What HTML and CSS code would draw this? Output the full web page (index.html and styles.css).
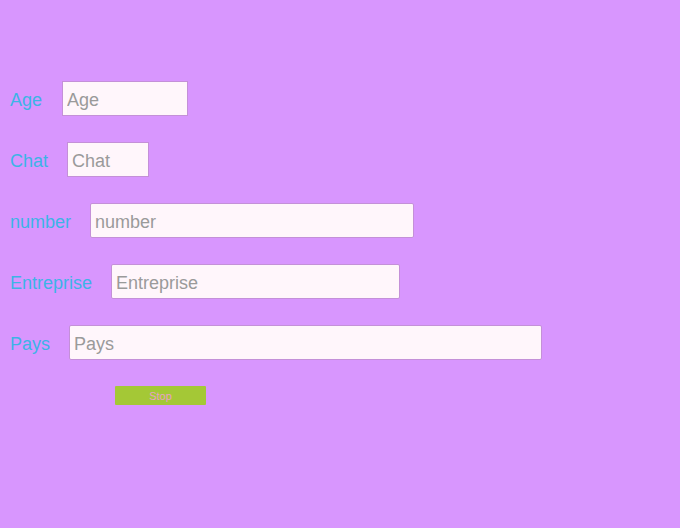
FILE: index.html
```html
<!DOCTYPE html>
<html>
<head>
<meta charset="utf-8">
<link rel="stylesheet" href="styles.css">
</head>
<body>
<form class="form">
  <div class="row">
    <label class="label">Age</label>
    <input class="field field-age" type="text" placeholder="Age">
  </div>
  <div class="row">
    <label class="label">Chat</label>
    <input class="field field-chat" type="text" placeholder="Chat">
  </div>
  <div class="row">
    <label class="label">number</label>
    <input class="field field-number round" type="text" placeholder="number">
  </div>
  <div class="row">
    <label class="label">Entreprise</label>
    <input class="field field-entreprise round" type="text" placeholder="Entreprise">
  </div>
  <div class="row">
    <label class="label">Pays</label>
    <input class="field field-pays round" type="text" placeholder="Pays">
  </div>
  <div class="actions">
    <button class="stop" type="button">Stop</button>
  </div>
</form>
</body>
</html>
```
FILE: styles.css
```css
html, body {
  margin: 0;
  padding: 0;
  background: #d896fe;
  font-family: "Liberation Sans", Arial, sans-serif;
}
.form {
  display: flex;
  flex-direction: column;
  gap: 26px;
  padding: 81px 0 0 10px;
}
.row {
  display: flex;
  align-items: center;
  height: 35px;
}
.label {
  font-size: 18px;
  color: #3cb4e6;
  padding-top: 3px;
}
.field {
  box-sizing: border-box;
  height: 35px;
  border: 1px solid #c490d8;
  background: #fff6fb;
  font-family: "Liberation Sans", Arial, sans-serif;
  font-size: 18px;
  padding: 3px 4px 0;
  color: #555;
  outline: none;
}
.field::placeholder {
  color: #9a9a9a;
}
.round {
  border-radius: 2px;
}
.field-age { margin-left: 20px; width: 126px; }
.field-chat { margin-left: 19px; width: 82px; }
.field-number { margin-left: 19px; width: 324px; }
.field-entreprise { margin-left: 19px; width: 289px; }
.field-pays { margin-left: 19px; width: 473px; }
.actions {
  display: flex;
  padding-left: 105px;
}
.stop {
  width: 91px;
  height: 19px;
  border: none;
  border-radius: 1px;
  background: #a4c836;
  color: #e8a2c8;
  font-family: "Liberation Sans", Arial, sans-serif;
  font-size: 11px;
  padding: 0;
}
```
